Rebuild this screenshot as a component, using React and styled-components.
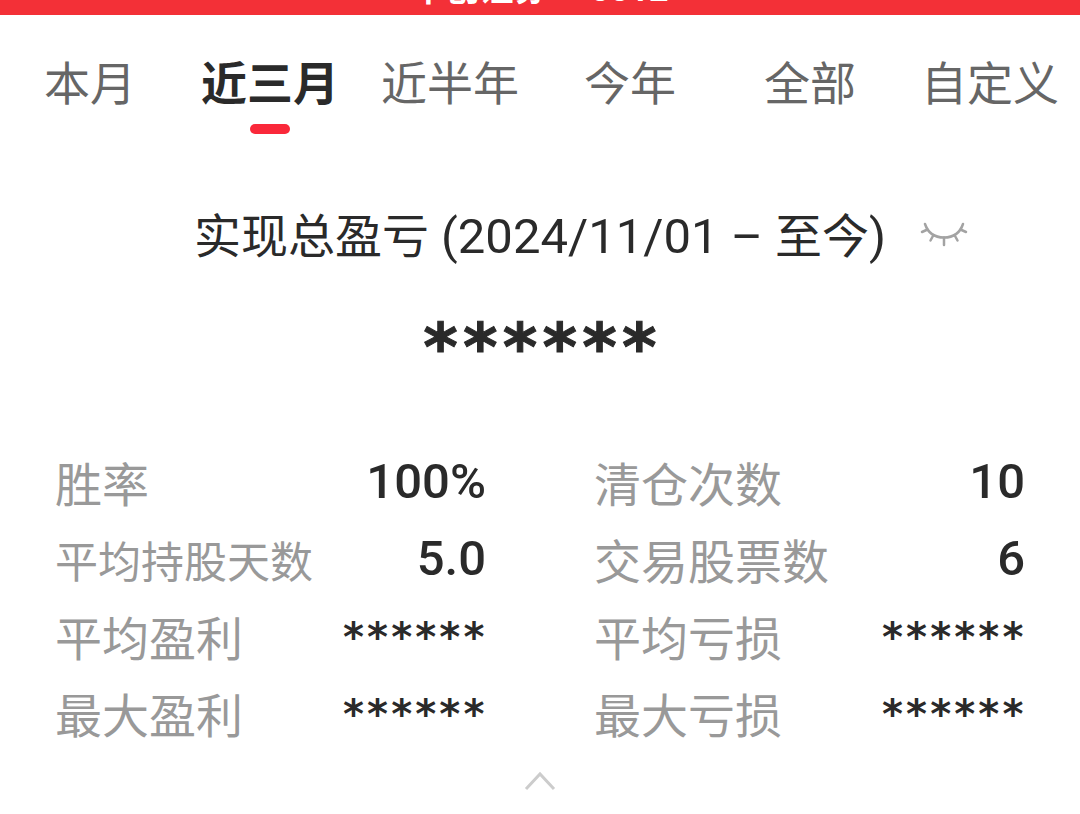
import React, { useState } from "react";
import styled, { createGlobalStyle, ThemeProvider } from "styled-components";

// Define our theme
const theme = {
  brandRed: "#F33037",
  accentRed: "#FA283A",
  ink: "#2A2A2A",
  tabGray: "#666666",
  labelGray: "#999999",
  iconGray: "#A3A3A3",
  chevronGray: "#CCCCCC",
};

const GlobalStyle = createGlobalStyle`
  body {
    margin: 0;
    background: white;
    font-family: Roboto, "Noto Sans CJK SC", sans-serif;
  }
  button {
    border: none;
    padding: 0;
    background: none;
    font: inherit;
    cursor: pointer;
  }
`;

// Styled Components

const Page = styled.main`
  display: flex;
  flex-direction: column;
  width: 100%;
`;

// Only the lower edge of the account name shows below the top of the screen
const AccountBar = styled.header`
  display: flex;
  align-items: flex-end;
  justify-content: center;
  height: 15px;
  overflow: hidden;
  background: ${({ theme }) => theme.brandRed};
  color: white;
  font-size: 34px;
  font-weight: bold;
  line-height: 52px;
  white-space: pre;
`;

const Tabs = styled.nav`
  display: grid;
  grid-template-columns: repeat(6, 1fr);
  padding-top: 37px;
`;

const Tab = styled.button`
  display: flex;
  flex-direction: column;
  align-items: center;
  gap: 8px;
  color: ${({ theme, $active }) => ($active ? theme.ink : theme.tabGray)};
  font-size: 46px;
  font-weight: ${({ $active }) => ($active ? "bold" : "normal")};
  line-height: 64px;
  white-space: nowrap;
  &::after {
    content: "";
    width: 40px;
    height: 10px;
    border-radius: 5px;
    background: ${({ theme, $active }) => ($active ? theme.accentRed : "transparent")};
  }
`;

const Summary = styled.section`
  display: flex;
  flex-direction: column;
  padding-top: 71px;
`;

const TitleRow = styled.div`
  display: grid;
  grid-template-columns: 1fr auto 1fr;
  align-items: center;
  column-gap: 34px;
`;

const Title = styled.h1`
  grid-column: 2;
  margin: 0;
  color: ${({ theme }) => theme.ink};
  font-size: 47px;
  font-weight: normal;
  line-height: 64px;
  white-space: nowrap;
`;

const Range = styled.span`
  font-size: 49px;
`;

const EyeButton = styled.button`
  display: flex;
  justify-self: start;
  padding-bottom: 4px;
  color: ${({ theme }) => theme.iconGray};
`;

const Masked = styled.span`
  font-family: "DejaVu Sans Mono", monospace;
  font-size: ${({ $large }) => ($large ? "66px" : "40px")};
  font-weight: bold;
  -webkit-text-stroke: ${({ $large }) => ($large ? "1px" : "0")};
`;

const Total = styled.p`
  margin: 35px 0 0;
  color: ${({ theme }) => theme.ink};
  line-height: 88px;
  text-align: center;
`;

const Stats = styled.dl`
  display: grid;
  grid-template-columns: 1fr 1fr;
  column-gap: 108px;
  margin: 38px 55px 0;
`;

const Stat = styled.div`
  display: flex;
  align-items: center;
  justify-content: space-between;
  height: 77px;
`;

const Label = styled.dt`
  color: ${({ theme }) => theme.labelGray};
  font-size: ${({ $compact }) => ($compact ? "43px" : "47px")};
  line-height: 64px;
  white-space: nowrap;
`;

const Value = styled.dd`
  margin: 0;
  padding-bottom: 8px;
  color: ${({ theme }) => theme.ink};
  font-size: 49px;
  font-weight: 500;
  line-height: 64px;
`;

const CollapseButton = styled.button`
  display: flex;
  align-self: center;
  margin-top: 16px;
  color: ${({ theme }) => theme.chevronGray};
`;

const TABS = ["本月", "近三月", "近半年", "今年", "全部", "自定义"];

const STATS = [
  { label: "胜率", value: "100%" },
  { label: "清仓次数", value: "10" },
  { label: "平均持股天数", value: "5.0" },
  { label: "交易股票数", value: "6" },
  { label: "平均盈利", masked: true },
  { label: "平均亏损", masked: true },
  { label: "最大盈利", masked: true },
  { label: "最大亏损", masked: true },
];

const MASK = "******";

const ClosedEye = () => (
  <svg width="48" height="26" viewBox="0 0 48 26" fill="none" stroke="currentColor" strokeWidth="2.5" strokeLinecap="round">
    <path d="M5 2C8 11 15 15.500 24 15.500S40 11 43 2" />
    <path d="M7.500 7.500L2 10M40.500 7.500L46 10M13.500 13L10.500 18.500M34.500 13L37.500 18.500M24 15.500V23" />
  </svg>
);

const ChevronUp = () => (
  <svg width="32" height="20" viewBox="0 0 32 20" fill="none" stroke="currentColor" strokeWidth="3">
    <path d="M2 18L16 3L30 18" />
  </svg>
);

export default function App() {
  const [active, setActive] = useState("近三月");

  return (
    <ThemeProvider theme={theme}>
      <GlobalStyle />
      <Page>
        <AccountBar>中创证券 — 0012</AccountBar>
        <Tabs>
          {TABS.map((tab) => (
            <Tab key={tab} $active={tab === active} onClick={() => setActive(tab)}>
              {tab}
            </Tab>
          ))}
        </Tabs>
        <Summary>
          <TitleRow>
            <Title>
              实现总盈亏<Range> (2024/11/01 – </Range>至今<Range>)</Range>
            </Title>
            <EyeButton aria-label="显示金额">
              <ClosedEye />
            </EyeButton>
          </TitleRow>
          <Total>
            <Masked $large>{MASK}</Masked>
          </Total>
        </Summary>
        <Stats>
          {STATS.map(({ label, value, masked }) => (
            <Stat key={label}>
              <Label $compact={label.length > 5}>{label}</Label>
              <Value>{masked ? <Masked>{MASK}</Masked> : value}</Value>
            </Stat>
          ))}
        </Stats>
        <CollapseButton aria-label="收起">
          <ChevronUp />
        </CollapseButton>
      </Page>
    </ThemeProvider>
  );
}
